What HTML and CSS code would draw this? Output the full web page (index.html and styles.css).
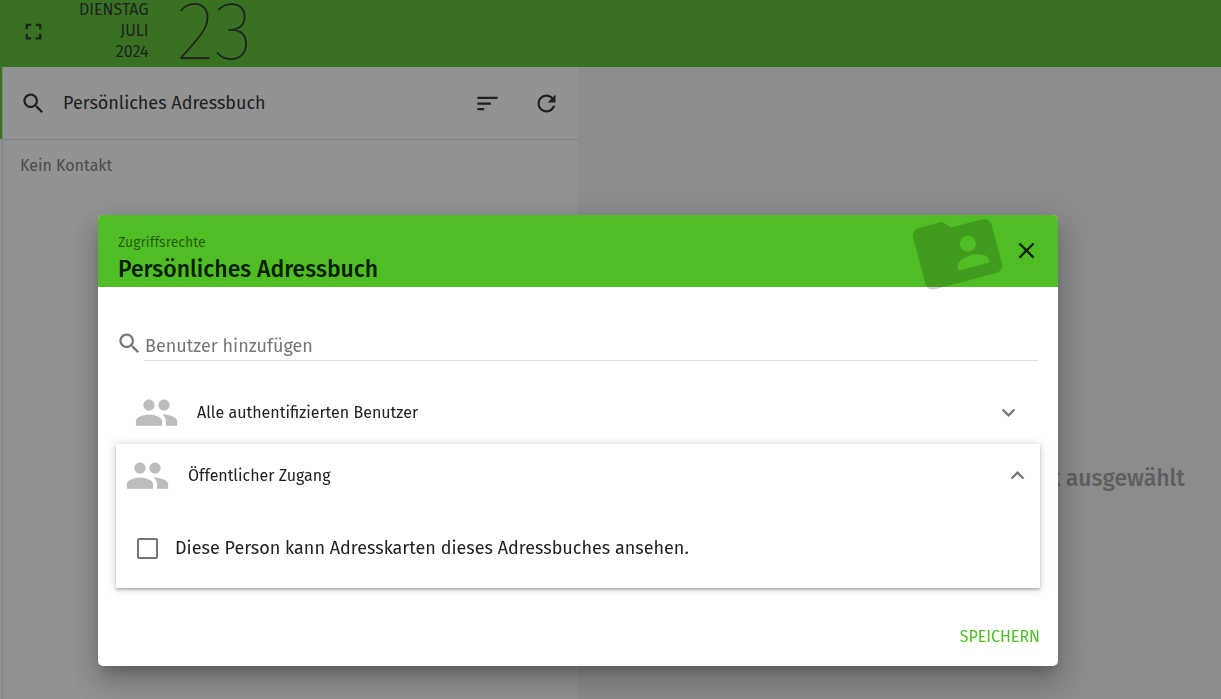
FILE: index.html
```html
<!DOCTYPE html>
<html lang="de">
<head>
<meta charset="utf-8">
<meta name="viewport" content="width=device-width, initial-scale=1">
<title>Persönliches Adressbuch</title>
<link rel="stylesheet" href="styles.css">
</head>
<body>
<div class="app">
  <div class="rail"></div>
  <div class="workspace">
    <header class="topbar">
      <button class="icon-button" type="button" aria-label="Vollbild">
        <svg class="icon" viewBox="0 0 24 24"><path d="M7 14H5v5h5v-2H7v-3zm-2-4h2V7h3V5H5v5zm12 7h-3v2h5v-5h-2v3zM14 5v2h3v3h2V5h-5z"/></svg>
      </button>
      <div class="date">
        <div class="date-parts"><span>DIENSTAG</span><span>JULI</span><span>2024</span></div>
        <div class="date-day">23</div>
      </div>
    </header>
    <div class="columns">
      <section class="list">
        <div class="list-toolbar">
          <button class="icon-button" type="button" aria-label="Suchen">
            <svg class="icon" viewBox="0 0 24 24"><path d="M15.5 14h-.79l-.28-.27C15.41 12.59 16 11.11 16 9.5 16 5.91 13.09 3 9.5 3S3 5.91 3 9.5 5.91 16 9.5 16c1.61 0 3.09-.59 4.23-1.57l.27.28v.79l5 4.99L20.49 19l-4.99-5zm-6 0C7.01 14 5 11.99 5 9.5S7.01 5 9.5 5 14 7.01 14 9.5 11.99 14 9.5 14z"/></svg>
          </button>
          <div class="list-title">Persönliches Adressbuch</div>
          <div class="list-actions">
            <button class="icon-button" type="button" aria-label="Sortieren">
              <svg class="icon" viewBox="0 0 24 24"><path d="M3 18h6v-2H3v2zM3 6v2h18V6H3zm0 7h12v-2H3v2z"/></svg>
            </button>
            <button class="icon-button" type="button" aria-label="Aktualisieren">
              <svg class="icon" viewBox="0 0 24 24"><path d="M17.65 6.35C16.2 4.9 14.21 4 12 4c-4.42 0-7.99 3.58-7.99 8s3.57 8 7.99 8c3.73 0 6.84-2.55 7.73-6h-2.08c-.82 2.33-3.04 4-5.65 4-3.31 0-6-2.69-6-6s2.69-6 6-6c1.66 0 3.14.69 4.22 1.78L13 11h7V4l-2.35 2.35z"/></svg>
            </button>
          </div>
        </div>
        <div class="list-empty">Kein Kontakt</div>
      </section>
      <section class="detail">
        <div class="detail-empty">Kein Kontakt ausgewählt</div>
      </section>
    </div>
  </div>
</div>

<div class="backdrop">
  <div class="dialog" role="dialog" aria-labelledby="dialog-title">
    <header class="dialog-head">
      <div class="dialog-heading">
        <div class="dialog-kicker">Zugriffsrechte</div>
        <h1 class="dialog-title" id="dialog-title">Persönliches Adressbuch</h1>
      </div>
      <svg class="dialog-emblem" viewBox="0 0 24 24"><path d="M20 6h-8l-2-2H4c-1.1 0-1.99.9-1.99 2L2 18c0 1.1.9 2 2 2h16c1.1 0 2-.9 2-2V8c0-1.1-.9-2-2-2zm-5 3c1.1 0 2 .9 2 2s-.9 2-2 2-2-.9-2-2 .9-2 2-2zm4 8h-8v-1c0-1.33 2.67-2 4-2s4 .67 4 2v1z"/></svg>
      <button class="icon-button" type="button" aria-label="Schließen">
        <svg class="icon" viewBox="0 0 24 24"><path d="M19 6.41L17.59 5 12 10.59 6.41 5 5 6.41 10.59 12 5 17.59 6.41 19 12 13.41 17.59 19 19 17.59 13.41 12z"/></svg>
      </button>
    </header>
    <div class="dialog-body">
      <label class="search">
        <svg class="icon muted" viewBox="0 0 24 24"><path d="M15.5 14h-.79l-.28-.27C15.41 12.59 16 11.11 16 9.5 16 5.91 13.09 3 9.5 3S3 5.91 3 9.5 5.91 16 9.5 16c1.61 0 3.09-.59 4.23-1.57l.27.28v.79l5 4.99L20.49 19l-4.99-5zm-6 0C7.01 14 5 11.99 5 9.5S7.01 5 9.5 5 14 7.01 14 9.5 11.99 14 9.5 14z"/></svg>
        <input class="search-input" type="text" placeholder="Benutzer hinzufügen" aria-label="Benutzer hinzufügen">
      </label>
      <div class="entry">
        <button class="entry-head" type="button" aria-expanded="false">
          <svg class="people" viewBox="0 0 24 24"><path d="M16 11c1.66 0 2.99-1.34 2.99-3S17.66 5 16 5c-1.66 0-3 1.34-3 3s1.34 3 3 3zm-8 0c1.66 0 2.99-1.34 2.99-3S9.66 5 8 5C6.34 5 5 6.34 5 8s1.34 3 3 3zm0 2c-2.33 0-7 1.17-7 3.5V19h14v-2.5c0-2.33-4.67-3.5-7-3.5zm8 0c-.29 0-.62.02-.97.05 1.16.84 1.97 1.97 1.97 3.45V19h6v-2.5c0-2.33-4.67-3.5-7-3.5z"/></svg>
          <span class="entry-name">Alle authentifizierten Benutzer</span>
          <svg class="icon muted" viewBox="0 0 24 24"><path d="M7.41 8.59L12 13.17l4.59-4.58L18 10l-6 6-6-6z"/></svg>
        </button>
      </div>
      <div class="entry entry-open">
        <button class="entry-head" type="button" aria-expanded="true">
          <svg class="people" viewBox="0 0 24 24"><path d="M16 11c1.66 0 2.99-1.34 2.99-3S17.66 5 16 5c-1.66 0-3 1.34-3 3s1.34 3 3 3zm-8 0c1.66 0 2.99-1.34 2.99-3S9.66 5 8 5C6.34 5 5 6.34 5 8s1.34 3 3 3zm0 2c-2.33 0-7 1.17-7 3.5V19h14v-2.5c0-2.33-4.67-3.5-7-3.5zm8 0c-.29 0-.62.02-.97.05 1.16.84 1.97 1.97 1.97 3.45V19h6v-2.5c0-2.33-4.67-3.5-7-3.5z"/></svg>
          <span class="entry-name">Öffentlicher Zugang</span>
          <svg class="icon muted" viewBox="0 0 24 24"><path d="M12 8l-6 6 1.41 1.41L12 10.83l4.59 4.58L18 14z"/></svg>
        </button>
        <label class="right">
          <input class="right-box" type="checkbox">
          <span>Diese Person kann Adresskarten dieses Adressbuches ansehen.</span>
        </label>
      </div>
    </div>
    <footer class="dialog-foot">
      <button class="save" type="button">SPEICHERN</button>
    </footer>
  </div>
</div>
</body>
</html>
```
FILE: styles.css
```css
* { box-sizing: border-box; }

body {
  margin: 0;
  font-family: "Fira Sans", Roboto, "Noto Sans", sans-serif;
  font-size: 18px;
  line-height: 24px;
  color: #212121;
}

button {
  margin: 0;
  padding: 0;
  border: 0;
  background: none;
  font: inherit;
  color: inherit;
}

.icon {
  display: block;
  flex: none;
  width: 27px;
  height: 27px;
  fill: currentColor;
}

.muted { color: #757575; }

.icon-button { flex: none; }

/* Application */
.app {
  display: flex;
  height: 100vh;
  overflow: hidden;
  background: #fff;
}

.rail {
  width: 2px;
  height: 139px;
  background: #4fbe25;
}

.workspace {
  flex: 1;
  display: flex;
  flex-direction: column;
}

.topbar {
  display: flex;
  align-items: center;
  height: 67px;
  padding: 0 18px 4px;
  background: #4fbe25;
}

.date {
  display: flex;
  align-items: center;
  justify-content: flex-end;
  gap: 28px;
  width: 206px;
}

.date-parts {
  display: flex;
  flex-direction: column;
  padding-bottom: 3px;
  font-size: 16px;
  line-height: 21px;
  text-align: right;
}

.date-day {
  font-size: 82px;
  font-weight: 100;
  line-height: 64px;
}

.columns {
  flex: 1;
  display: flex;
}

.list {
  flex: 0 1 576px;
  border-left: 1px solid #e0e0e0;
}

.list-toolbar {
  display: flex;
  align-items: center;
  gap: 16px;
  height: 73px;
  padding: 0 18px 0 17px;
  border-bottom: 1px solid #d8d8d8;
}

.list-title {
  flex: 1;
}

.list-actions {
  display: flex;
  gap: 32px;
}

.list-empty {
  padding: 14px 17px;
  font-size: 16px;
  color: #757575;
}

.detail {
  flex: 1;
  display: flex;
  align-items: center;
  justify-content: flex-end;
  padding: 190px 36px 0 0;
  background: #f2f3f6;
}

.detail-empty {
  font-size: 23px;
  font-weight: 500;
  color: #9c9c9c;
}

/* Dialog */
.backdrop {
  position: fixed;
  inset: 0;
  padding: 215px 163px 33px 98px;
  background: rgba(33, 33, 33, 0.49);
}

.dialog {
  overflow: hidden;
  border-radius: 5px;
  background: #fff;
  box-shadow: 0 8px 10px -5px rgba(0, 0, 0, 0.2), 0 17px 26px 2px rgba(0, 0, 0, 0.14), 0 7px 32px 6px rgba(0, 0, 0, 0.12);
}

.dialog-head {
  display: flex;
  align-items: center;
  gap: 8px;
  height: 72px;
  padding: 0 18px 1px 20px;
  background: #4fbe25;
  color: rgba(0, 0, 0, 0.87);
}

.dialog-heading {
  flex: 1;
  padding-top: 16px;
}

.dialog-kicker {
  font-size: 14px;
  line-height: 20px;
  color: rgba(0, 0, 0, 0.54);
}

.dialog-title {
  margin: 0;
  font-size: 23px;
  font-weight: 500;
  line-height: 32px;
}

.dialog-emblem {
  flex: none;
  width: 95px;
  height: 95px;
  fill: rgba(0, 0, 0, 0.18);
  transform: rotate(-15deg);
}

.dialog-body { padding: 43px 18px 0; }

.search {
  display: flex;
  gap: 1px;
  padding-right: 2px;
}

.search-input {
  flex: 1;
  min-width: 0;
  height: 31px;
  margin-bottom: 20px;
  padding: 2px 1px 0;
  border: 0;
  border-bottom: 1px solid #e0e0e0;
  background: none;
  color: #212121;
  font: inherit;
}

.search-input::placeholder {
  color: #757575;
  opacity: 1;
}

.entry { padding: 0 9px; }

.entry-head {
  display: flex;
  align-items: center;
  gap: 18px;
  width: 100%;
  height: 63px;
  padding: 0 9px;
  text-align: left;
}

.entry-name {
  flex: 1;
  font-size: 16px;
}

.people {
  flex: none;
  width: 45px;
  height: 45px;
  fill: #bdbdbd;
}

.entry-open {
  padding: 0;
  background: #fff;
  box-shadow: 0 1px 9px rgba(0, 0, 0, 0.2), 0 2px 2px rgba(0, 0, 0, 0.2);
}

.right {
  display: flex;
  align-items: center;
  gap: 17px;
  padding: 29px 21px 28px;
}

.right-box {
  flex: none;
  appearance: none;
  width: 21px;
  height: 21px;
  margin: 0;
  border: 2px solid #757575;
  border-radius: 2px;
}

.right-box:checked { background: #4fbe25; }

.dialog-foot {
  display: flex;
  justify-content: flex-end;
  padding: 33px 18px 13px;
}

.save {
  height: 32px;
  font-size: 16px;
  color: #4fbe25;
}
```
